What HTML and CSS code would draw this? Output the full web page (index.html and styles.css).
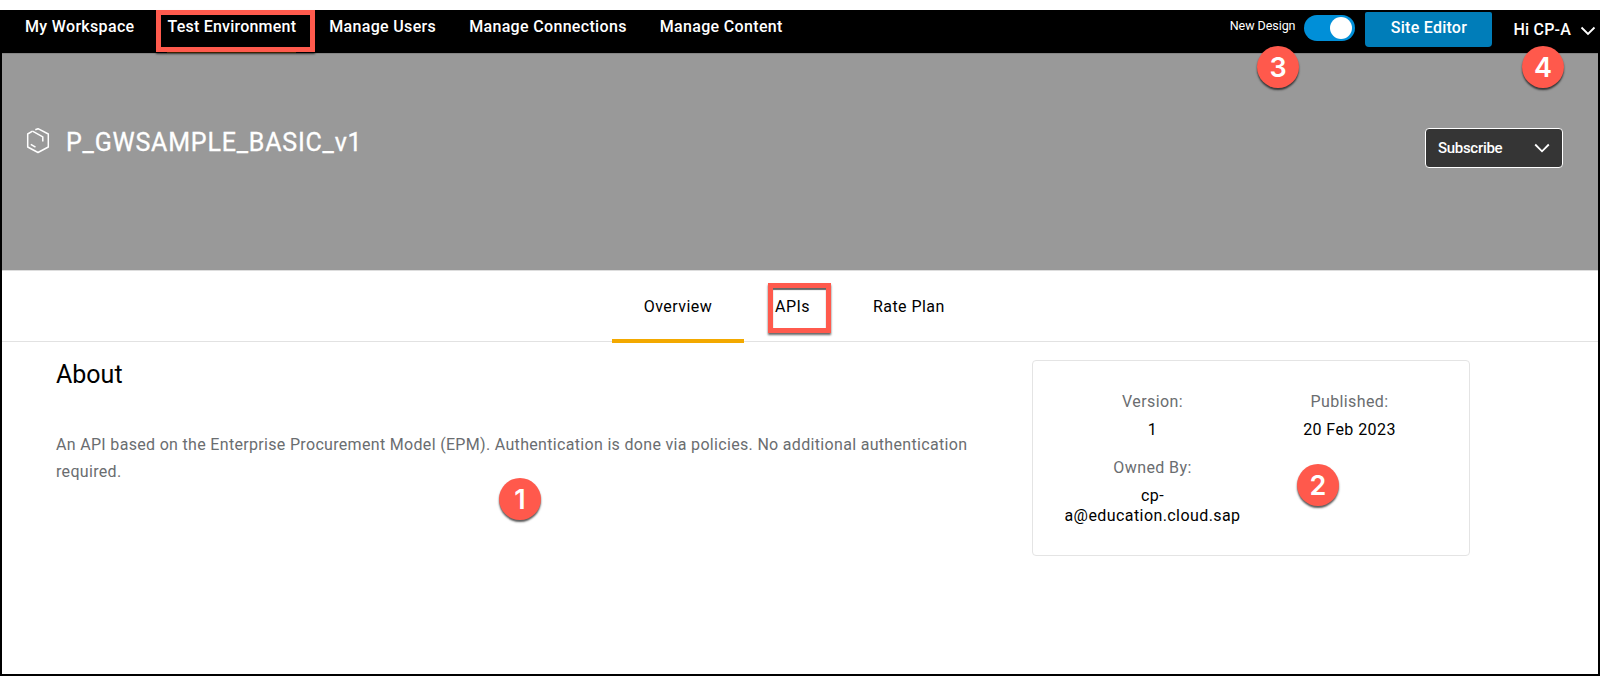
FILE: index.html
```
<!DOCTYPE html>
<html lang="en">
<head>
<meta charset="utf-8">
<title>P_GWSAMPLE_BASIC_v1</title>
<link rel="stylesheet" href="styles.css">
</head>
<body>
<div class="frame">
  <header class="topbar">
    <nav class="nav">
      <a class="nav-item">My Workspace</a>
      <a class="nav-item active">Test Environment</a>
      <a class="nav-item">Manage Users</a>
      <a class="nav-item">Manage Connections</a>
      <a class="nav-item">Manage Content</a>
    </nav>
    <div class="actions">
      <span class="design-label">New Design</span>
      <span class="toggle"><span class="knob"></span></span>
      <button class="editor">Site Editor</button>
      <span class="user"><span class="user-name">Hi CP-A</span>
        <svg width="16" height="10" viewBox="0 0 16 10"><path d="M1.500 1.500 8 8l6.500-6.500" fill="none" stroke="#fff" stroke-width="1.800"/></svg>
      </span>
    </div>
  </header>
  <section class="hero">
    <svg class="hex" width="24" height="27" viewBox="0 0 24 27" fill="none" stroke="#fff" stroke-width="1.500" stroke-linejoin="round">
      <path d="M6.500 4.200 1.700 7v13L12 25.500 22.300 20V7L12 1.700 9.300 2.800"/>
      <path d="M6.500 4.200 16.800 9.800V14.500M4.800 17.300l4.700 2.900"/>
    </svg>
    <h1 class="title">P_GWSAMPLE_BASIC_v1</h1>
    <button class="subscribe"><span>Subscribe</span>
      <svg width="16" height="10" viewBox="0 0 16 10"><path d="M1.200 1.500 8 8.300l6.800-6.800" fill="none" stroke="#fff" stroke-width="1.800"/></svg>
    </button>
  </section>
  <div class="tabs">
    <a class="tab selected">Overview</a>
    <a class="tab">APIs</a>
    <a class="tab">Rate Plan</a>
  </div>
  <main class="body">
    <article class="about">
      <h2 class="heading">About</h2>
      <p class="description">An API based on the Enterprise Procurement Model (EPM). Authentication is done via policies. No additional authentication required.</p>
    </article>
    <aside class="card">
      <div class="field"><span class="label">Version:</span><span class="value">1</span></div>
      <div class="field"><span class="label">Published:</span><span class="value">20 Feb 2023</span></div>
      <div class="field"><span class="label">Owned By:</span><span class="value">cp-<br>a@education.cloud.sap</span></div>
    </aside>
  </main>
</div>
<div class="mark mark-nav"></div>
<div class="mark mark-apis"></div>
<div class="badge b1">1</div>
<div class="badge b2">2</div>
<div class="badge b3">3</div>
<div class="badge b4">4</div>
</body>
</html>
```
FILE: styles.css
```
* { box-sizing: border-box; }
body { margin: 0; padding-top: 10px; height: 686px; overflow: hidden; background: #fff; font-family: Roboto, "Liberation Sans", sans-serif; font-size: 16px; color: #000; position: relative; }
h1, h2, p { margin: 0; font-weight: 400; }
button { font: inherit; color: #fff; padding: 0; }
svg { display: block; flex: none; }
.frame { height: 666px; border: solid #000; border-width: 0 2px 2px; display: flex; flex-direction: column; }
.topbar { height: 43px; margin: 0 -2px; background: #000; color: #fff; display: flex; justify-content: space-between; }
.nav { display: flex; padding-left: 25px; gap: 33px; padding-top: 7px; font-weight: 500; line-height: 20px; letter-spacing: .33px; white-space: nowrap; }
.active { letter-spacing: .22px; border-bottom: 2px solid #8a5000; }
.actions { display: flex; align-items: flex-start; padding-right: 4px; white-space: nowrap; }
.design-label { font-size: 12.5px; letter-spacing: -.05px; line-height: 16px; margin: 8px 9px 0 0; }
.toggle { width: 51px; height: 26px; border-radius: 13px; background: #008fd8; margin: 5px 10px 0 0; padding: 2px 3px; display: flex; justify-content: flex-end; }
.knob { width: 22px; height: 22px; border-radius: 50%; background: #fff; }
.editor { width: 127px; height: 35px; margin-top: 2px; border: 0; border-radius: 2px 2px 4px 4px; background: #007db9; font-weight: 500; letter-spacing: .25px; line-height: 31px; padding-bottom: 4px; }
.user { display: flex; margin: 10px 0 0 21px; line-height: 20px; gap: 9px; letter-spacing: .2px; font-weight: 500; }
.user svg { margin-top: 6px; }
.hero { height: 217px; background: #999; border-top: 1px solid #858585; color: #fff; display: flex; align-items: flex-start; padding-left: 24px; padding-right: 35px; }
.hex { margin-top: 73px; }
.title { font-size: 25px; letter-spacing: .8px; line-height: 30px; margin: 74px 0 0 16px; flex: 1; white-space: nowrap; -webkit-text-stroke: .3px #fff; }
.subscribe { width: 138px; height: 40px; margin-top: 74px; background: #353535; border: 1px solid #fff; border-radius: 4px; display: flex; align-items: center; justify-content: space-between; padding: 0 12px; font-size: 15px; letter-spacing: -.3px; font-weight: 500; }
.tabs { height: 72px; border-top: 1px solid #ddd; border-bottom: 1px solid #e2e2e2; display: flex; line-height: 20px; letter-spacing: .45px; padding: 26px 0 0 610px; flex: none; gap: 63px; }
.tab { white-space: nowrap; }
.selected { width: 132px; height: 46px; border-bottom: 4px solid #f3a900; text-align: center; flex: none; margin-right: -32px; }
.body { display: flex; align-items: flex-start; padding-left: 54px; }
.about { width: 976px; }
.heading { font-size: 25px; line-height: 30px; margin-top: 18px; }
.description { color: #6a6d70; line-height: 27px; letter-spacing: .32px; margin-top: 41px; width: 930px; }
.card { width: 438px; height: 196px; margin-top: 18px; border: 1px solid #e4e4e4; border-radius: 4px; display: grid; grid-template-columns: 197px 197px; grid-template-rows: 66px auto; justify-content: center; padding-top: 31px; text-align: center; letter-spacing: .42px; }
.field { display: flex; flex-direction: column; gap: 8px; line-height: 20px; }
.label { color: #6a6d70; letter-spacing: .4px; }
.mark { position: absolute; border: 5px solid #ff5a4d; box-shadow: 0 2px 2px rgba(0,0,0,.6), inset 0 2px 1px rgba(0,0,0,.6); }
.mark-nav { left: 156px; top: 10px; width: 159px; height: 42px; }
.mark-apis { left: 768px; top: 283px; width: 63px; height: 50px; }
.badge { position: absolute; width: 42px; height: 42px; border-radius: 50%; background: #ff594c; color: #fff; box-shadow: 0 2px 2px rgba(0,0,0,.65); font: 600 27px/43px Inter, "Liberation Sans", sans-serif; text-align: center; }
.b1 { left: 499px; top: 478px; }
.b2 { left: 1297px; top: 464px; }
.b3 { left: 1257px; top: 46px; }
.b4 { left: 1522px; top: 46px; }
```
